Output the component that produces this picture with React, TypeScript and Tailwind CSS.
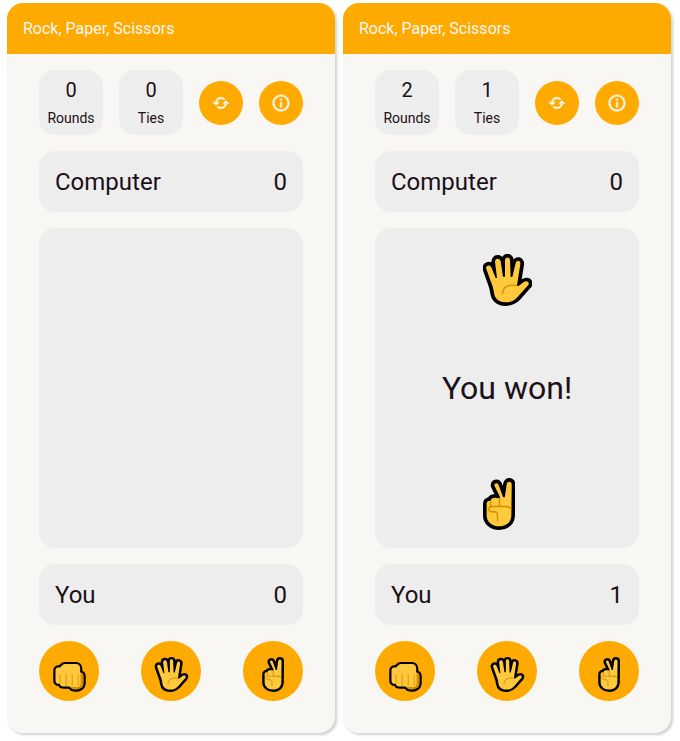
import React from "react";
import { BiInfoCircle, BiRefresh } from "react-icons/bi";

type HandProps = { className: string };

function Paper({ className }: HandProps) {
  return (
    <svg viewBox="39 27 147 156" className={className}>
      <path
        d="M49 72C45 62 59 57 64 67L77 99H81L75 51C75 38 90 38 92 49L99 95H105V45C106 35 119 35 120 45L122 96H127L137 54C140 44 153 46 151 58L144 102L141 123C150 125 157 110 169 109C178 109 178 118 173 122L142 157C129 171 118 172 106 172C89 172 75 163 72 145C70 126 65 117 60 103Z"
        fill="#ffc83d" stroke="#000" strokeWidth="22" strokeLinejoin="round" paintOrder="stroke"
      />
      <path d="M97 147C98 122 118 119 139 121" fill="none" stroke="#d68d00" strokeWidth="4" strokeLinecap="round" />
    </svg>
  );
}

function Scissors({ className }: HandProps) {
  return (
    <svg viewBox="38 24 97 157" className={className}>
      <path
        d="M49 102C49 94 55 92 61 93C63 84 72 81 84 85L91 84L73 48C70 39 81 36 85 44L99 82H104L110 42C112 31 126 33 125 44L124 136C124 158 108 170 87 170C65 170 49 156 49 137Z"
        fill="#ffc83d" stroke="#000" strokeWidth="22" strokeLinejoin="round" paintOrder="stroke"
      />
      <path d="M61 95V110M88 84V110M122 115C119 111 115 110 108 110H65C52 110 53 126 64 126H73C81 126 82 132 82 138V153M108 110C116 110 121 113 123 119" fill="none" stroke="#d68d00" strokeWidth="4" strokeLinecap="round" />
    </svg>
  );
}

function Rock({ className }: HandProps) {
  return (
    <svg viewBox="69 81 98 89" className={className}>
      <path
        d="M76 106C76 98 81 94 90 96C94 91 97 87 104 87H137C147 87 151 94 151 102V111C158 111 161 117 161 124V144C161 156 151 164 137 164C128 164 122 161 118 155H102C95 155 90 153 89 147C80 147 76 143 76 135Z"
        fill="#ffc83d"
      />
      <path d="M151 112C158 113 160 119 160 124V144C160 156 150 163 137 163C129 163 124 160 120 155H143C150 154 152 147 151 138Z" fill="#d68d00" />
      <path
        d="M73 106C73 98 80 92 89 94C93 88 97 84 104 84H137C147 84 153 92 153 102V110C160 111 163 117 163 124V144C163 157 152 166 137 166C128 166 121 163 117 157H102C95 157 88 155 87 149C78 149 73 144 73 135Z"
        fill="none" stroke="#000" strokeWidth="6.5" strokeLinejoin="round"
      />
      <path d="M90 119V145M108 119V151M126 119V151M144 119V150" fill="none" stroke="#d68d00" strokeWidth="2.5" strokeLinecap="round" />
    </svg>
  );
}

function Counter({ value, label }: { value: number; label: string }) {
  return (
    <div className="flex h-[65px] w-16 flex-col items-center rounded-2xl bg-[#ededed] pt-1.5">
      <span className="text-xl leading-7">{value}</span>
      <span className="mt-1 text-sm leading-5">{label}</span>
    </div>
  );
}

function Score({ name, value }: { name: string; value: number }) {
  return (
    <div className="flex h-[61px] items-center justify-between rounded-2xl bg-[#ededed] px-4 text-2xl">
      <span>{name}</span>
      <span>{value}</span>
    </div>
  );
}

function Game({ rounds, ties, you, result }: { rounds: number; ties: number; you: number; result?: string }) {
  const round = "flex size-11 items-center justify-center rounded-full bg-[#ffaa00] text-[#f8f7f3]";
  const choice = "size-[60px] rounded-full bg-[#ffaa00]";
  return (
    <section className="h-[730px] w-[328px] overflow-hidden rounded-2xl bg-[#f8f7f3] shadow-[2px_2px_3px_0px_rgba(0,0,0,0.19)]">
      <header className="flex h-[51px] items-center bg-[#ffaa00] px-4 text-base text-[#f8f7f3]">Rock, Paper, Scissors</header>
      <main className="flex flex-col gap-4 px-8 pt-4">
        <div className="flex items-center justify-between">
          <Counter value={rounds} label="Rounds" />
          <Counter value={ties} label="Ties" />
          <button className={round}><BiRefresh size={20} className="stroke-current stroke-[0.4]" /></button>
          <button className={round}><BiInfoCircle size={20} className="stroke-current stroke-[0.5]" /></button>
        </div>
        <Score name="Computer" value={0} />
        <div className="flex h-80 flex-col items-center rounded-2xl bg-[#ededed] pt-[26px]">
          {result && (
            <>
              <div className="w-12"><Paper className="h-[52px] w-[49px] max-w-none" /></div>
              <div className="flex h-[164px] items-center text-[32px]">{result}</div>
              <div className="mt-2 w-12"><Scissors className="h-[52px] w-8" /></div>
            </>
          )}
        </div>
        <Score name="You" value={you} />
        <div className="flex justify-between">
          <button className={choice + " pl-3.5"}><Rock className="mt-3 h-[30px] w-[33px] overflow-visible" /></button>
          <button className={choice + " pl-3.5"}><Paper className="mt-[7px] h-[35px] w-[33px] overflow-visible" /></button>
          <button className={choice + " pl-[19px]"}><Scissors className="mt-[7px] h-[35px] w-[22px] overflow-visible" /></button>
        </div>
      </main>
    </section>
  );
}

export default function App() {
  return (
    <div className="flex h-[741px] w-[680px] gap-2 overflow-hidden bg-white pt-[3px] pl-[7px] font-['Roboto',sans-serif] text-[#1c1018]">
      <Game rounds={0} ties={0} you={0} />
      <Game rounds={2} ties={1} you={1} result="You won!" />
    </div>
  );
}
